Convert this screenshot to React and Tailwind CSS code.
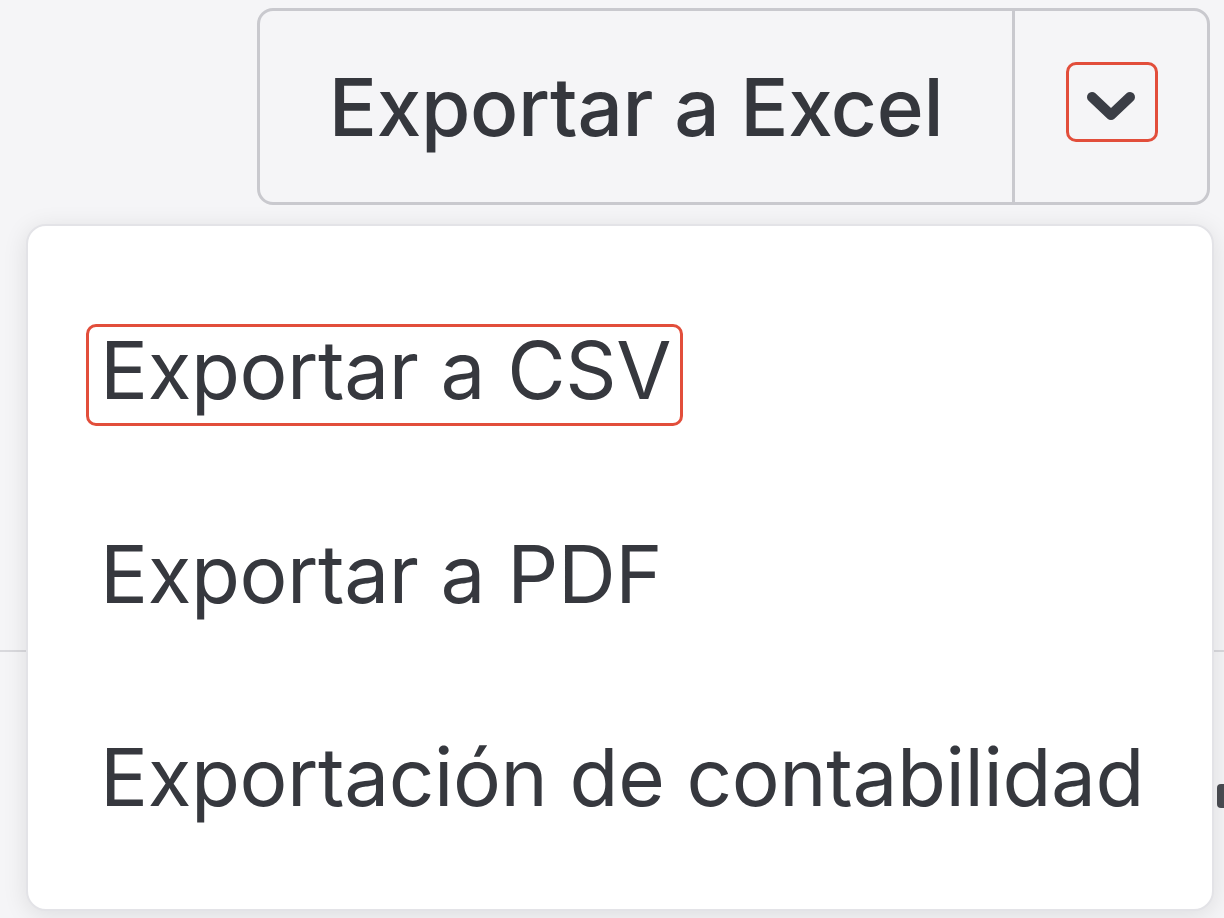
import React from "react";

const menuItems = ["Exportar a CSV", "Exportar a PDF", "Exportación de contabilidad"];

const Chevron = () => (
  <svg width="54" height="40" viewBox="0 0 54 40" fill="none">
    <path d="M8 10 L27 28 L46 10" stroke="#3b3e46" strokeWidth="10" strokeLinecap="round" strokeLinejoin="round" />
  </svg>
);

const App = () => {
  return (
    <div className="relative min-h-screen overflow-hidden bg-[#f5f5f7] font-['Inter','Liberation_Sans',sans-serif]">
      {/* Page behind the menu */}
      <div className="flex justify-end pt-[8px] pr-[14px]">
        <div className="flex h-[197px] rounded-[16px] border-[3px] border-[#c9c9ce] bg-[#f5f5f7]">
          <button className="flex w-[752px] items-center justify-center text-[80px] font-medium leading-[80px] tracking-[-0.3px] text-[#35373d]">
            Exportar a Excel
          </button>
          <div className="w-[3px] bg-[#c9c9ce]" />
          <button className="flex w-[192px] items-center justify-center">
            <span className="relative flex">
              <Chevron />
              <span className="absolute -left-[18px] -top-[25px] h-[80px] w-[92px] rounded-[10px] border-[3px] border-[#e24e3b]" />
            </span>
          </button>
        </div>
      </div>
      <div className="mt-[445px] h-[2px] w-full bg-[#d9d9dd]" />
      <div className="mt-[132px] flex justify-end">
        <div className="h-[24px] w-[7px] rounded-l-sm bg-[#4a4c52]" />
      </div>

      {/* Dropdown menu */}
      <div className="absolute left-[26px] top-[224px] flex h-[687px] w-[1188px] flex-col rounded-[20px] border-2 border-[#e3e3e7] bg-white pt-[42px] pb-[30px] shadow-[0_4px_24px_rgba(0,0,0,0.10)]">
        {menuItems.map((item, i) => (
          <div key={item} className="flex h-[204px] items-center pl-[72px]">
            <span className="relative text-[80px] leading-[80px] tracking-[-0.4px] text-[#36383e]">
              {item}
              {i === 0 && (
                <span className="absolute -left-[14px] -top-[6px] -right-[12px] -bottom-[16px] rounded-[10px] border-[3px] border-[#e24e3b]" />
              )}
            </span>
          </div>
        ))}
      </div>
    </div>
  );
};

export default App;
